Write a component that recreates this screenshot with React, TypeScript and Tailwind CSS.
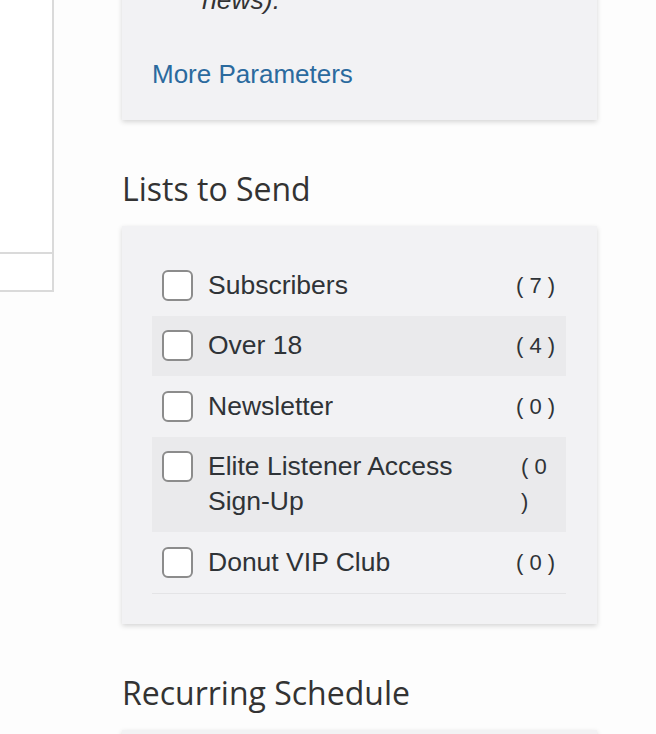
import React from "react";

const rows = [
  { label: "Subscribers", count: "( 7 )", striped: false },
  { label: "Over 18", count: "( 4 )", striped: true },
  { label: "Newsletter", count: "( 0 )", striped: false },
  { label: "Elite Listener Access Sign-Up", count: "( 0 )", striped: true, narrow: true },
  { label: "Donut VIP Club", count: "( 0 )", striped: false },
];

const sans = { fontFamily: '"Liberation Sans", Arial, sans-serif' };
const heading = { fontFamily: '"Open Sans", "Liberation Sans", sans-serif' };

function Label({ text }: { text: string }) {
  const words = text.split(" ");
  return (
    <>
      {words.map((w, i) => (
        <React.Fragment key={i}>
          <span className="whitespace-nowrap">{w}</span>
          {i < words.length - 1 ? " " : ""}
        </React.Fragment>
      ))}
    </>
  );
}

export default function App() {
  return (
    <div className="w-[656px] h-[734px] overflow-hidden bg-[#fdfdfd] text-[#333]" style={sans}>
      <div className="flex">
        <div className="w-[54px] h-[292px] shrink-0 border-r-2 border-b-2 border-[#dadada] bg-white flex flex-col">
          <div className="h-[254px] border-b-2 border-[#dadada]" />
        </div>
        <div className="ml-[68px] w-[475px] -mt-[60px]">
          <div className="bg-[#f2f2f4] shadow-[0_2px_5px_rgba(0,0,0,0.16)] pt-[42.5px] pb-[28.5px] px-[30px]">
            <div className="pl-[50px] italic text-[26.5px] leading-[35px] text-[#333]">news).</div>
            <div className="mt-[39px] text-[26px] leading-[35px] text-[#2b6a9e]">More Parameters</div>
          </div>

          <h2 className="mt-[49px] h-[40px] text-[32px] leading-[40px] text-[#333]" style={heading}>
            Lists to Send
          </h2>

          <div className="mt-[17px] bg-[#f2f2f4] shadow-[0_2px_5px_rgba(0,0,0,0.16)] pt-[29px] pb-[30px] pl-[30px] pr-[31px]">
            <div className="border-b border-[#e4e4e6]">
              {rows.map((r) => (
                <div
                  key={r.label}
                  className={`flex items-start py-[12.75px] pl-[10px] pr-[10px] ${r.striped ? "bg-[#eaeaec]" : ""}`}
                >
                  <span className="mt-[2px] w-[31px] h-[31px] shrink-0 rounded-[6px] border-2 border-[#8c8c8c] bg-white" />
                  <span className="ml-[15px] flex-1 min-w-0 text-[26.5px] leading-[35px] text-[#2f3337]">
                    <Label text={r.label} />
                  </span>
                  <span
                    className={`shrink-0 text-[22px] leading-[35px] text-[#2f3337] ${r.narrow ? "w-[35px]" : "w-[40px]"}`}
                  >
                    {r.count}
                  </span>
                </div>
              ))}
            </div>
          </div>

          <h2 className="mt-[49px] h-[40px] text-[32px] leading-[40px] text-[#333]" style={heading}>
            Recurring Schedule
          </h2>

          <div className="mt-[17px] h-[200px] bg-[#f2f2f4] shadow-[0_2px_5px_rgba(0,0,0,0.16)]" />
        </div>
      </div>
    </div>
  );
}
